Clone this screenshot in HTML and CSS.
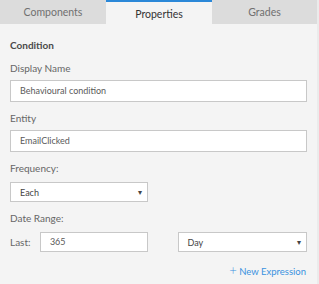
FILE: index.html
```html
<!DOCTYPE html>
<html>
    <head>
        <meta charset="UTF-8" name="viewport" content="width=device-width, initial-scale=1">
        <link rel="stylesheet" href="styles.css">
    </head>
    <body>
        <div class="panel">
            <div class="tab">
                <button class="tablinks">Components</button>
                <button class="tablinks active">Properties</button>
                <button class="tablinks">Grades</button>
            </div>

            <div class="tabcontent">
                <h4 class="heading">Condition</h4>

                <label class="label">Display Name</label>
                <div class="input wide">Behavioural condition</div>

                <label class="label">Entity</label>
                <div class="input wide">EmailClicked</div>

                <label class="label">Frequency:</label>
                <div class="select freq"><span>Each</span><span class="arrow">&#9662;</span></div>

                <label class="label">Date Range:</label>
                <div class="range">
                    <span class="last">Last:</span>
                    <div class="input num">365</div>
                    <div class="select unit"><span>Day</span><span class="arrow">&#9662;</span></div>
                </div>

                <div class="actions">
                    <a class="newexpr" href="#"><span class="plus">+</span> New Expression</a>
                </div>
            </div>
        </div>
    </body>
</html>
```

FILE: styles.css
```css
body {
    margin: 0;
    font-family: Lato, "Open Sans", Arial, sans-serif;
    background-color: #f4f4f4;
}

.panel {
    width: 317px;
    height: 284px;
    border-right: 2px solid #ebebeb;
    background-color: #f4f4f4;
}

/* Tabs */
.tab {
    display: flex;
    height: 24px;
}

.tab button {
    flex: 0 0 106px;
    height: 24px;
    border: none;
    outline: none;
    padding: 0;
    background-color: #dcdcdc;
    color: #707070;
    font-family: inherit;
    font-size: 10.5px;
    cursor: pointer;
}

.tab button:last-child {
    flex-basis: 105px;
}

.tab button.active {
    background-color: #f4f4f4;
    border-top: 2px solid #2b88d8;
    color: #333;
    padding-top: 2px;
}

/* Content */
.tabcontent {
    padding: 13px 10px 0 10px;
}

.heading {
    margin: 0 0 7px 0;
    font-size: 10px;
    line-height: 16px;
    font-weight: 700;
    color: #4a4a4a;
}

.label {
    display: block;
    font-size: 10px;
    line-height: 16px;
    color: #666;
    margin-bottom: 4px;
}

.input {
    box-sizing: border-box;
    height: 22px;
    line-height: 20px;
    padding: 0 9px;
    border: 1px solid #c8c8c8;
    background-color: #fff;
    font-size: 9px;
    color: #5a5a5a;
}

.input.wide {
    width: 297px;
    margin-bottom: 8px;
}

.select {
    box-sizing: border-box;
    display: flex;
    justify-content: space-between;
    align-items: center;
    height: 20px;
    padding: 0 5px 0 9px;
    border: 1px solid #c8c8c8;
    background-color: #fff;
    font-size: 9px;
    color: #444;
}

.select .arrow {
    font-size: 8px;
    color: #444;
}

.select.freq {
    width: 138px;
    margin-top: 6px;
    margin-bottom: 8px;
}

.range {
    display: flex;
    align-items: center;
    margin-top: 6px;
}

.last {
    width: 30px;
    font-size: 10px;
    color: #666;
}

.input.num {
    width: 108px;
    height: 20px;
    line-height: 18px;
}

.select.unit {
    width: 130px;
    margin-left: 30px;
}

.actions {
    display: flex;
    justify-content: flex-end;
    margin-top: 10px;
    padding-right: 1px;
}

.newexpr {
    font-size: 9.5px;
    line-height: 16px;
    color: #3a92e0;
    text-decoration: none;
}

.newexpr .plus {
    font-size: 13px;
    font-weight: 300;
}
```
